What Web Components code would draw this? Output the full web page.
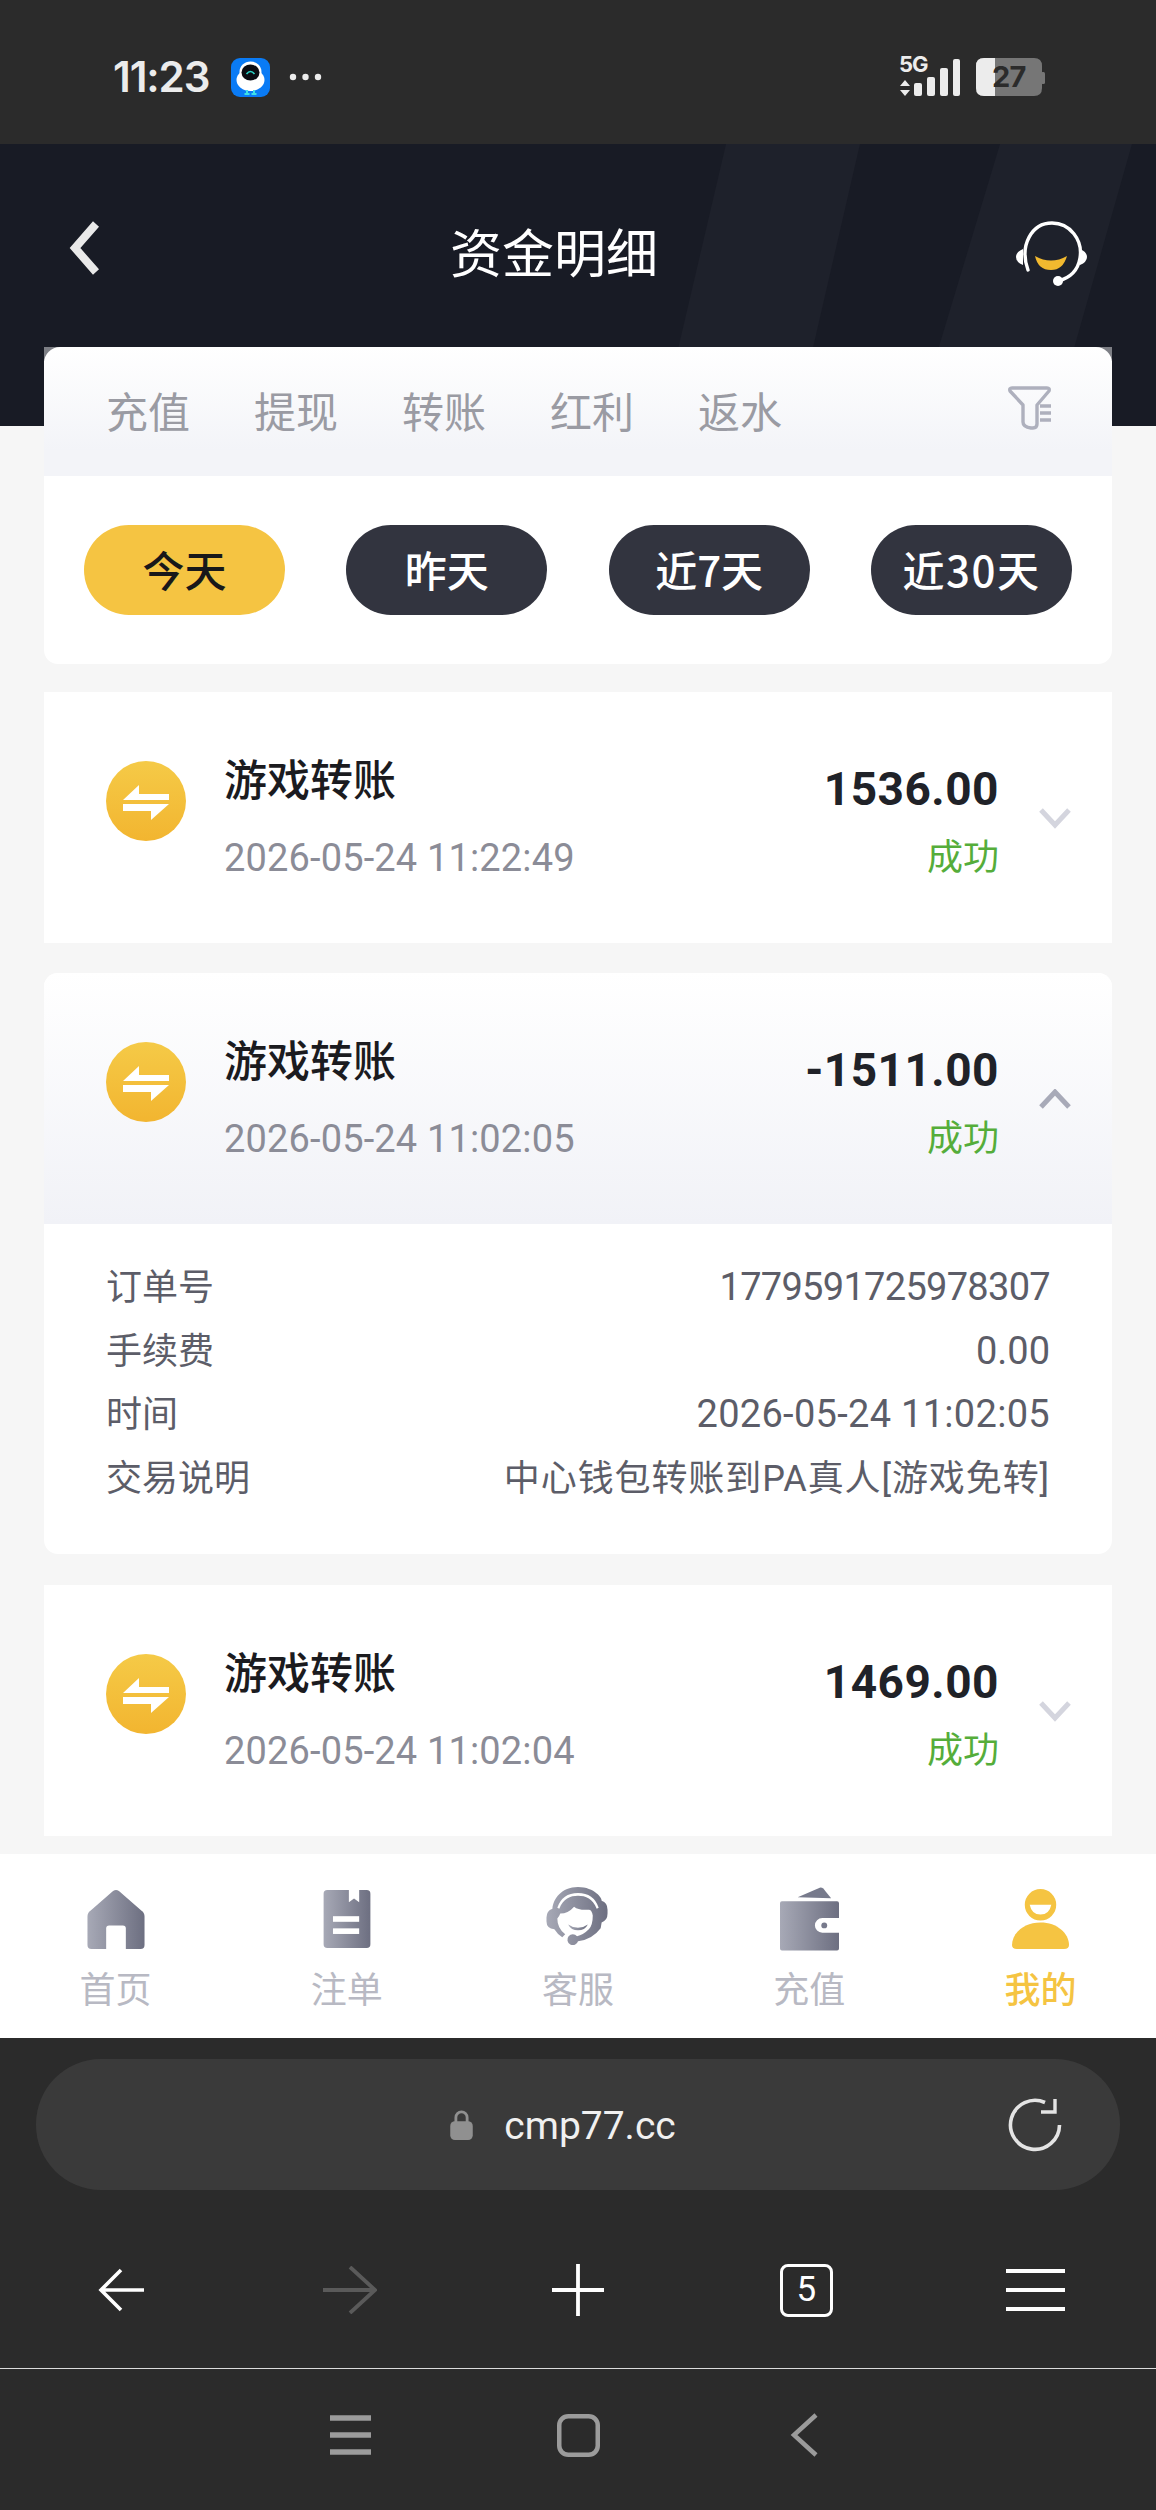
<!DOCTYPE html>
<html lang="zh"><head><meta charset="utf-8">
<style>
html,body{margin:0;padding:0;background:#f6f6f6}
body{width:1156px;height:2510px;overflow:hidden;font-family:"Noto Sans CJK SC","Noto Sans",sans-serif}
</style></head>
<body>
<app-screen>
  <status-bar></status-bar>
  <page-header></page-header>
  <main-area>
    <filter-card style="margin-bottom:28px"></filter-card>
    <record-card style="margin-bottom:30px" amount="1536.00" time="2026-05-24 11:22:49"></record-card>
    <record-card style="margin-bottom:31px" amount="-1511.00" time="2026-05-24 11:02:05" open></record-card>
    <record-card amount="1469.00" time="2026-05-24 11:02:04"></record-card>
  </main-area>
  <tab-bar></tab-bar>
  <browser-bar></browser-bar>
  <system-nav></system-nav>
</app-screen>
<script>
const CJK='"Noto Sans CJK SC","Noto Sans",sans-serif';
function def(name,html){
  customElements.define(name,class extends HTMLElement{
    constructor(){super();this.attachShadow({mode:'open'});if(typeof html!=='function')this.shadowRoot.innerHTML=html;}
    connectedCallback(){ if(typeof html==='function'){this.shadowRoot.innerHTML=html(this);} }
  });
}
def('app-screen',`<style>:host{display:flex;flex-direction:column;width:1156px;height:2510px;background:#f6f6f6;overflow:hidden}</style><slot></slot>`);

def('status-bar',`<style>
:host{display:flex;align-items:center;height:144px;flex:none;background:#2b2b2b;padding:10px 0 0 113px;box-sizing:border-box;color:#ececec}
.t{font:600 42px/1 Inter,Roboto,sans-serif;letter-spacing:-1.100px;width:101px}
.app{margin-left:17px}
.dots{margin-left:19px}
.r{margin-left:auto;margin-right:111px;margin-top:-3px;position:relative;width:146px;height:42px}
.g{position:absolute;left:0;top:-3px;font:700 22px/24px Inter,Roboto,sans-serif;letter-spacing:-1px;color:#ececec}
.n{position:absolute;left:93px;top:6px;font:700 29px/32px Inter,Roboto,sans-serif;letter-spacing:-.8px;color:#2b2b2b}
svg{display:block}
</style>
<span class="t">11:23</span>
<svg class="app" width="39" height="39" viewBox="0 0 39 39"><rect width="39" height="39" rx="9" fill="#0a7bf5"/><ellipse cx="19.500" cy="22" rx="14" ry="11" fill="#fff"/><ellipse cx="19.500" cy="14" rx="11" ry="10.500" fill="#fff"/><ellipse cx="19.500" cy="14.500" rx="9" ry="8" fill="#0b0d14"/><path d="M15.500 16q4-5 8 0" fill="none" stroke="#2bd4c8" stroke-width="1.600"/><path d="M16 32v3.500M23 32v3.500M13.500 36h5M20.500 36h5" stroke="#3fe0e6" stroke-width="2"/></svg>
<svg class="dots" width="33" height="8" viewBox="0 0 33 8"><circle cx="4" cy="4" r="3.200" fill="#ececec"/><circle cx="16.500" cy="4" r="3.200" fill="#ececec"/><circle cx="29" cy="4" r="3.200" fill="#ececec"/></svg>
<div class="r"><svg width="146" height="42" viewBox="0 0 146 42">
<path d="M6 25l5 6H1zM6 41l5-6H1z" fill="#ececec"/>
<rect x="15" y="28" width="8" height="13" rx="2" fill="#ececec"/><rect x="28" y="22" width="8" height="19" rx="2" fill="#ececec"/><rect x="41" y="13" width="8" height="28" rx="2" fill="#ececec"/><rect x="54" y="4" width="7" height="37" rx="2" fill="#ececec"/>
<path d="M77 11q0-8 8-8h50q8 0 8 8v22q0 8-8 8H85q-8 0-8-8z" fill="#767676"/><rect x="142" y="17" width="4" height="12" rx="1.500" fill="#767676"/>
<path d="M96 3H85q-8 0-8 8v22q0 8 8 8h11z" fill="#ececec"/></svg><span class="g">5G</span><span class="n">27</span></div>`);

def('page-header',`<style>
:host{display:flex;align-items:center;justify-content:center;height:282px;background:#181b25;position:relative;padding:0 48px 68px 0;box-sizing:border-box;color:#fff;overflow:hidden;flex:none}
.bg{position:absolute;left:0;top:0}
h1{margin:0;font:400 52px/1 ${CJK};position:relative}
.b{position:absolute;left:67px;top:77px}
.s{position:absolute;left:1016px;top:77px}
</style>
<svg class="bg" width="1156" height="282" viewBox="0 0 1156 282"><polygon points="726,0 860,0 795,282 660,282" fill="#1e212b"/><polygon points="1000,0 1132,0 1052,282 915,282" fill="#1e212b"/></svg>
<svg class="b" width="36" height="54" viewBox="0 0 36 54"><path d="M29 3L8 27l21 24" fill="none" stroke="#e9e9e9" stroke-width="8"/></svg>
<h1>资金明细</h1>
<svg class="s" width="71" height="66" viewBox="0 0 71 66"><path d="M12 49C3 24 16 2 36 2c18 0 31 17 28 35-2 12-10 20-22 23" fill="none" stroke="#fff" stroke-width="3.400" stroke-linecap="round"/><path d="M7 28q-7 3-7 8t7 8zM64 28q7 3 7 8t-7 8z" fill="#fff"/><circle cx="42" cy="60" r="5" fill="#fff"/><path d="M19 35q16 9 32 0q-4 14-16 14q-13 0-16-14z" fill="#f2b92f"/></svg>`);

def('main-area',`<style>:host{display:flex;flex-direction:column;flex:none;height:1507px;margin-top:-79px;padding:0 44px;box-sizing:border-box;position:relative;overflow:hidden}</style><slot></slot>`);

def('filter-card',`<style>
:host{display:block;flex:none;height:317px;border-radius:0 0 14px 14px;background:#fff}
.wrap{background:linear-gradient(#7d7f85,#7d7f85) top/100% 14px no-repeat}
.tabs{height:129px;box-sizing:border-box;padding:0 0 0 62px;display:flex;align-items:center;gap:63px;background:linear-gradient(#fff,#f3f4f8 80%);border-radius:16px 16px 0 0;font:400 42px/1 ${CJK};color:#9a9ba3;position:relative}
.tabs span{position:relative;top:-2px;width:85px;white-space:nowrap}
.tabs svg{position:absolute;left:964px;top:39px}
.pills{display:flex;justify-content:space-between;padding:49px 40px 0;height:90px}
.p{width:201px;height:90px;box-sizing:border-box;padding-bottom:2px;border-radius:45px;background:#32343f;color:#fff;display:flex;align-items:center;justify-content:center;font:500 42px/1 ${CJK}}
.p.on{background:#f5c442;color:#18181a}
</style>
<div class="wrap"><div class="tabs"><span>充值</span><span>提现</span><span>转账</span><span>红利</span><span>返水</span>
<svg width="44" height="44" viewBox="0 0 44 44"><path d="M4 2h35q3 0 2 3L29 19v19q0 4-4 4h-2q-8-1-8-6V19L2 5Q1 2 4 2z" fill="none" stroke="#aeb0bd" stroke-width="3.400" stroke-linejoin="round"/><path d="M32 20h11M32 27h11M32 34h11" stroke="#aeb0bd" stroke-width="3.600"/></svg></div></div>
<div class="pills"><div class="p on">今天</div><div class="p">昨天</div><div class="p">近7天</div><div class="p" style="letter-spacing:1.500px">近30天</div></div>`);

def('swap-icon',`<style>:host{display:block;width:80px;height:80px;flex:none}svg{display:block}</style>
<svg width="80" height="80" viewBox="0 0 80 80"><defs><linearGradient id="g" x1="0" y1="0" x2="0" y2="1"><stop offset="0" stop-color="#f5ca47"/><stop offset="1" stop-color="#f2b530"/></linearGradient></defs><circle cx="40" cy="40" r="40" fill="url(#g)"/><path d="M17 39L33 24v9h30v6zM17 43h46L45 59v-9H17z" fill="#fff"/></svg>`);

def('record-card',(el)=>{
 const open=el.hasAttribute('open');
 return `<style>
:host{display:block;flex:none;background:#fff;${open?'border-radius:14px;':''}overflow:hidden}
.head{display:flex;height:251px;box-sizing:border-box;padding:0 62px;position:relative;${open?'background:linear-gradient(#fff,#f1f2f7);':''}align-items:stretch}
swap-icon{margin-top:69px}
.l{margin-left:38px;flex:1}
.name{font:500 43px/1 ${CJK};color:#1b1b1f;margin-top:64px}
.time{font:400 38px/1 Roboto,Inter,sans-serif;color:#8b8c97;margin-top:40px;letter-spacing:.15px}
.r{text-align:right;margin-right:51px}
.amt{font:700 46px/1 Roboto,Inter,sans-serif;color:#202228;margin-top:74px;letter-spacing:.5px}
.st{font:400 36px/1 ${CJK};color:#55ad3a;margin-top:24px}
.ch{position:absolute;right:41px;top:116px}
.d{padding:29px 62px 0;height:330px;box-sizing:border-box;font:400 36px/63.5px ${CJK};color:#5c5d68}
.row{display:flex;justify-content:space-between;align-items:baseline;height:63.5px;line-height:63.5px}
.row b{font:400 38px/63.5px Roboto,${CJK}}
.row b.id{letter-spacing:-.7px}
.row b.dt{letter-spacing:.3px}
.row b.ds{font-size:36px;letter-spacing:.9px}
</style>
<div class="head"><swap-icon></swap-icon><div class="l"><div class="name">游戏转账</div><div class="time">${el.getAttribute('time')}</div></div>
<div class="r"><div class="amt">${el.getAttribute('amount')}</div><div class="st">成功</div></div>
<svg class="ch" width="32" height="22" viewBox="0 0 32 22"><path d="${open?'M2 18L16 3l14 15':'M2 2l14 15L30 2'}" fill="none" stroke="${open?'#a8aab8':'#d4d5de'}" stroke-width="5"/></svg></div>
${open?`<div class="d"><div class="row"><span>订单号</span><b class="id">1779591725978307</b></div><div class="row"><span>手续费</span><b>0.00</b></div><div class="row"><span>时间</span><b class="dt">2026-05-24 11:02:05</b></div><div class="row"><span>交易说明</span><b class="ds">中心钱包转账到PA真人[游戏免转]</b></div></div>`:''}`;
});

const G=(id)=>`<defs><linearGradient id="${id}"><stop offset="0" stop-color="#a7a9b6"/><stop offset="1" stop-color="#6d6f81"/></linearGradient></defs>`;
def('tab-bar',`<style>
:host{display:flex;height:184px;flex:none;background:#fff}
.i{flex:1;display:flex;flex-direction:column;align-items:center;color:#b8b9c3;font:400 36px/1 ${CJK}}
.i.on{color:#f5c442;font-weight:500}
.ic{height:64px;margin-top:33px;margin-bottom:18px;display:flex;align-items:center;justify-content:center}
svg{display:block}
</style>
<div class="i"><div class="ic"><svg width="58" height="60" viewBox="0 0 58 61">${G('a')}<path d="M26 2q3-2 6 0l23 20q3 2 3 6v29q0 4-4 4H39V40q0-3-3-3H22q-3 0-3 3v21H4q-4 0-4-4V28q0-4 3-6z" fill="url(#a)"/></svg></div>首页</div>
<div class="i"><div class="ic"><svg width="50" height="58" viewBox="0 0 50 62">${G('b')}<path d="M4 0h23v13l5.500-4 5.500 4V0h8q4 0 4 4v54q0 4-4 4H4q-4 0-4-4V4q0-4 4-4z" fill="url(#b)"/><rect x="10" y="28" width="28" height="6" fill="#fff"/><rect x="10" y="41" width="28" height="6" fill="#fff"/></svg></div>注单</div>
<div class="i"><div class="ic"><svg width="64" height="65" viewBox="0 0 64 66">${G('c')}<path d="M32 0C15 0 7 12 6 22q-6 2-6 9v4q0 7 8 8 3 5 8 8l3-3q-8-6-8-16 2-2 3-5 8 0 14-7 5 4 15 3 3 0 4 6 0 10-4 14-6 6-12 7a5.500 5.500 0 1 0 1 5q14-1 23-13l1-6q6-2 6-9v-4q0-7-6-9C57 12 49 0 32 0zm0 6q16 0 21 15l-2 1C47 12 40 9 32 9S17 12 13 22l-2-1Q16 6 32 6z" fill="url(#c)"/><path d="M22 38q10 7 20 0-3 6-10 6t-10-6z" fill="url(#c)"/></svg></div>客服</div>
<div class="i"><div class="ic"><svg width="59" height="64" viewBox="0 0 60 64">${G('d')}<path d="M18 10L41 0q2 0 3 1l8 10z" fill="#777a8c"/><path d="M2 14h56q2 0 2 2v15H43a7 7 0 0 0 0 15h17v16q0 2-2 2H2q-2 0-2-2V16q0-2 2-2z" fill="url(#d)"/><circle cx="45" cy="38.500" r="3" fill="#777a8c"/></svg></div>充值</div>
<div class="i on"><div class="ic"><svg width="57" height="61" viewBox="0 0 58 62"><path fill-rule="evenodd" d="M29 0a16 16 0 1 1 0 32 16 16 0 0 1 0-32zM18 16q2 10 11 10t11-10z" fill="#f5c442"/><path d="M29 34c17 0 29 11 29 23q0 4-5 4H5q-5 0-5-4c0-12 12-23 29-23z" fill="#f5c442"/></svg></div>我的</div>`);

def('browser-bar',`<style>
:host{display:block;height:331px;flex:none;background:#2b2b2b;padding-top:21px;box-sizing:border-box;border-bottom:1px solid #dcdcdc}
.url{margin:0 36px;height:131px;border-radius:65px;background:#3a3a3a;display:flex;align-items:center;justify-content:center;color:#f0f0f0;position:relative;padding-right:30px}
.url span{font:400 39px/1 Roboto,Inter,sans-serif;margin-left:31px;margin-top:4px}
.re{position:absolute;left:972px;top:39px}
.tools{display:grid;grid-template-columns:repeat(5,1fr);padding:0 7px;height:56px;margin-top:72px;align-items:center;justify-items:center}
.tools>*{display:block}
.num{width:53px;height:53px;box-sizing:border-box;border:3.500px solid #fff;border-radius:8px;color:#fff;font:400 35px/46px Roboto,sans-serif;text-align:center}
</style>
<div class="url"><svg width="23" height="30" viewBox="0 0 24 32"><path d="M6 14V8a6 6 0 0 1 12 0v6" fill="none" stroke="#909090" stroke-width="3"/><rect y="12" width="24" height="20" rx="5" fill="#909090"/></svg><span>cmp77.cc</span>
<svg class="re" width="54" height="54" viewBox="0 0 54 54"><path d="M37 4.500A24.500 24.500 0 1 0 51.500 27" fill="none" stroke="#e4e4e4" stroke-width="3.600"/><path d="M47 1v13H33" fill="none" stroke="#e4e4e4" stroke-width="3.400"/></svg></div>
<div class="tools">
<svg width="46" height="44" viewBox="0 0 46 44"><path d="M23 2L3 22l20 20M3 22h43" fill="none" stroke="#fff" stroke-width="3.600"/></svg>
<svg width="54" height="48" viewBox="0 0 54 48"><path d="M27 1l25 23-25 23M0 24h52" fill="none" stroke="#5a5a5a" stroke-width="3.800"/></svg>
<svg width="52" height="52" viewBox="0 0 52 52"><path d="M26 0v52M0 26h52" stroke="#fff" stroke-width="3.800"/></svg>
<div class="num">5</div>
<svg style="margin-left:2px" width="59" height="44" viewBox="0 0 59 44"><path d="M0 3h59M0 22h59M0 41h59" stroke="#fff" stroke-width="4"/></svg>
</div>`);

def('system-nav',`<style>
:host{display:flex;flex:1;background:#2b2b2b;align-items:center;justify-content:center;padding:0 7px 9px 0}
svg{display:block}
</style>
<svg width="41" height="40" viewBox="0 0 41 40"><path d="M0 3h41M0 20h41M0 37h41" stroke="#9b9b9b" stroke-width="5.500"/></svg>
<svg style="margin-left:186px" width="43" height="43" viewBox="0 0 43 43"><rect x="2.250" y="2.250" width="38.500" height="38.500" rx="9" fill="none" stroke="#9b9b9b" stroke-width="4.500"/></svg>
<svg style="margin-left:190px" width="29" height="44" viewBox="0 0 29 44"><path d="M26 2L4 22l22 20" fill="none" stroke="#9b9b9b" stroke-width="4.500"/></svg>`);
</script>
</body></html>
